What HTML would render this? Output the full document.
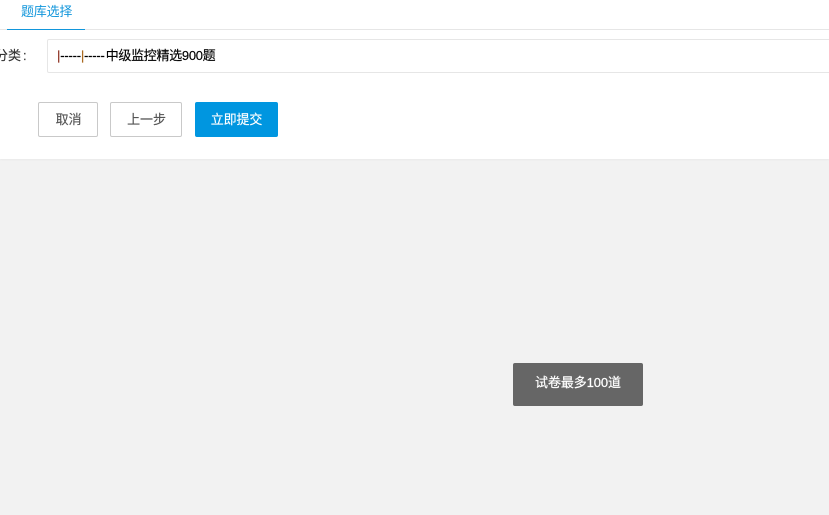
<!DOCTYPE html>
<html lang="zh">
<head>
<meta charset="utf-8">
<style>
html,body{margin:0;padding:0;width:829px;height:515px;overflow:hidden;background:#f2f2f2;font-family:"Liberation Sans","Noto Sans CJK SC",sans-serif;font-size:13px;}
.abs{position:absolute;white-space:nowrap;}
.panel{position:absolute;left:0;top:0;width:829px;height:159px;background:#fff;box-shadow:0 1px 2px rgba(0,0,0,.04);}
.btn{position:absolute;box-sizing:border-box;height:35px;top:102px;text-align:center;line-height:33px;border:1px solid #c9c9c9;border-radius:2px;color:#555;background:#fff;letter-spacing:-.1px;-webkit-text-stroke:.15px currentColor;}
</style>
</head>
<body>
<div class="panel"></div>
<div class="abs" style="left:0;top:29px;width:829px;height:1px;background:#e6e6e6;"></div>
<div class="abs" style="left:7px;top:29px;width:78px;height:1px;background:#1296db;"></div>
<div class="abs" style="left:21px;top:2px;line-height:20px;color:#1296db;letter-spacing:-.2px;">题库选择</div>
<div class="abs" style="left:-5px;top:46px;line-height:20px;color:#333;-webkit-text-stroke:.15px currentColor;">分类<span style="margin-left:2px;">:</span></div>
<div class="abs" style="left:47px;top:39px;width:790px;height:34px;box-sizing:border-box;border:1px solid #e6e6e6;border-radius:2px;background:#fff;"></div>
<div class="abs" style="left:57px;top:46px;line-height:20px;color:#000;letter-spacing:-.2px;-webkit-text-stroke:.15px currentColor;"><span style="color:#8a2a1a;">|</span>-----<span style="color:#a8661a;">|</span>-----<span style="margin-left:1px;letter-spacing:-.3px;">中级监控精选900题</span></div>
<div class="btn" style="left:38px;width:60px;padding-left:1px;">取消</div>
<div class="btn" style="left:110px;width:72px;padding-left:1px;">上一步</div>
<div class="btn" style="left:195px;width:83px;background:#0096e0;border-color:#0096e0;color:#fff;">立即提交</div>
<div class="abs" style="left:513px;top:363px;width:130px;height:43px;border-radius:2px;background:#666;color:#fff;text-align:center;line-height:39px;letter-spacing:-.1px;-webkit-text-stroke:.2px currentColor;">试卷最多100道</div>
</body>
</html>
